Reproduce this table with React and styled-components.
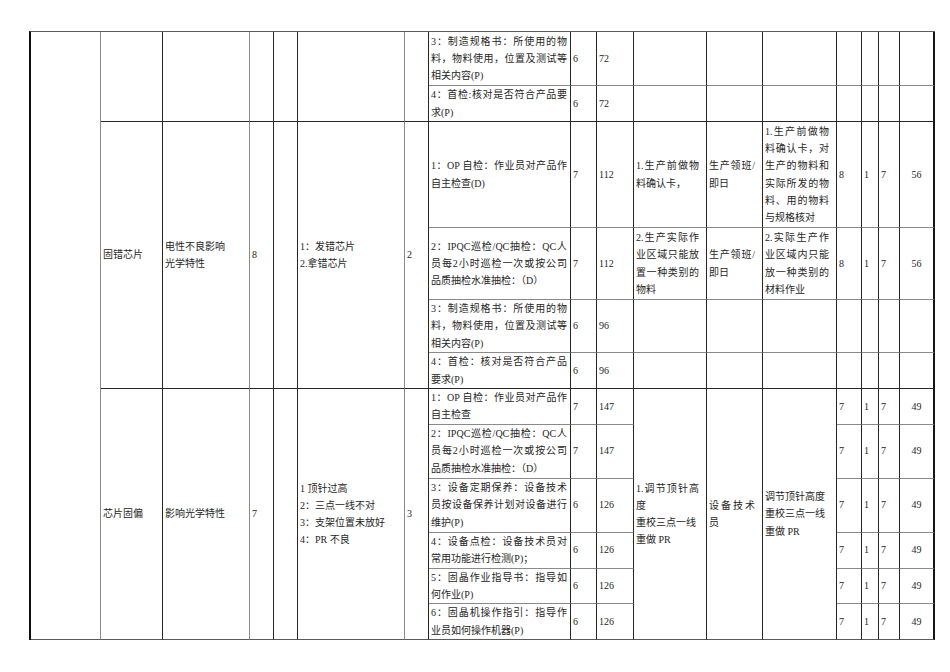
import React from "react";
import styled, { createGlobalStyle } from "styled-components";

const GlobalStyle = createGlobalStyle`
  html, body { margin: 0; padding: 0; background: #ffffff; }
  *, *::before, *::after { box-sizing: border-box; }
  body {
    font-family: "Liberation Serif", "Noto Sans CJK SC", serif;
    font-size: 10px;
    color: #262626;
  }
`;

const WIDTHS = [70, 62, 87, 24, 24, 107, 24, 142, 26, 37, 73, 56, 74, 25, 17, 21, 35];
const SOFT_COLS = new Set([0, 2, 5]);
const DARK = "#262626";
const SOFT = "#8a8a8a";

const Page = styled.div`
  padding: 31px 0 0 29px;
`;

const Sheet = styled.table`
  width: 906px;
  table-layout: fixed;
  border-collapse: separate;
  border-spacing: 0;
  border-left: 2px solid #111;
  border-top: 1px solid #5a5a5a;
`;

const Row = styled.tr`
  height: ${(p) => p.$h}px;
`;

const Cell = styled.td`
  padding: 0 ${(p) => (p.$pr != null ? p.$pr : 2)}px 0 2px;
  border-right: ${(p) =>
    p.$col === 16 ? `2px solid #161616` : `1px solid ${SOFT_COLS.has(p.$col) ? SOFT : DARK}`};
  border-bottom: 1px solid ${(p) => (p.$last ? "#5a5a5a" : p.$soft ? SOFT : DARK)};
  vertical-align: middle;
  text-align: ${(p) => (p.$center ? "center" : "left")};
  line-height: 17.3px;
  overflow: hidden;
`;

const Line = styled.div`
  text-align: ${(p) => (p.$j ? "justify" : "left")};
  text-align-last: ${(p) => (p.$j ? "justify" : "auto")};
  text-justify: inter-character;
`;

/* Paragraph: every line but the last is stretched to the cell width */
function Para({ lines, justifyAll = true, only = null }) {
  return lines.map((t, i) => {
    const j = only ? only.includes(i) : justifyAll && i < lines.length - 1;
    return (
      <Line key={i} $j={j}>
        {t}
      </Line>
    );
  });
}

function Plain({ lines }) {
  return lines.map((t, i) => <Line key={i}>{t}</Line>);
}

/* control (c7) + detection (c8) + rpn (c9) */
function Control({ lines, d, rpn, soft, last }) {
  return (
    <>
      <Cell $col={7} $pr={3} $soft={soft} $last={last}>
        <Para lines={lines} />
      </Cell>
      <Cell $col={8} $soft={soft} $last={last}>{d}</Cell>
      <Cell $col={9} $soft={soft} $last={last}>{rpn}</Cell>
    </>
  );
}

function Result({ s, o, d, rpn, soft, last }) {
  return (
    <>
      <Cell $col={13} $soft={soft} $last={last}>{s}</Cell>
      <Cell $col={14} $soft={soft} $last={last}>{o}</Cell>
      <Cell $col={15} $soft={soft} $last={last}>{d}</Cell>
      <Cell $col={16} $center $soft={soft} $last={last}>{rpn}</Cell>
    </>
  );
}

function EmptyActions({ soft }) {
  return (
    <>
      <Cell $col={10} $soft={soft} />
      <Cell $col={11} $soft={soft} />
      <Cell $col={12} $soft={soft} />
      <Cell $col={13} $soft={soft} />
      <Cell $col={14} $soft={soft} />
      <Cell $col={15} $soft={soft} />
      <Cell $col={16} $soft={soft} />
    </>
  );
}

const RULE3 = ["3：制造规格书：所使用的物", "料，物料使用，位置及测试等", "相关内容(P)"];
const IPQC = ["2：IPQC巡检/QC抽检：QC人", "员每2小时巡检一次或按公司", "品质抽检水准抽检：（D）"];

export default function App() {
  return (
    <Page>
      <GlobalStyle />
      <Sheet>
        <colgroup>
          {WIDTHS.map((w, i) => (
            <col key={i} style={{ width: w }} />
          ))}
        </colgroup>
        <tbody>
          {/* group 1 (continued from previous page) */}
          <Row $h={54}>
            <Cell $col={0} rowSpan={12} $last />
            <Cell $col={1} rowSpan={2} />
            <Cell $col={2} rowSpan={2} />
            <Cell $col={3} rowSpan={2} />
            <Cell $col={4} rowSpan={2} />
            <Cell $col={5} rowSpan={2} />
            <Cell $col={6} rowSpan={2} />
            <Control lines={RULE3} d="6" rpn="72" soft />
            <EmptyActions soft />
          </Row>
          <Row $h={36}>
            <Control lines={["4：首检:核对是否符合产品要", "求(P)"]} d="6" rpn="72" />
            <EmptyActions />
          </Row>

          {/* group 2: 固错芯片 */}
          <Row $h={106}>
            <Cell $col={1} rowSpan={4}>固错芯片</Cell>
            <Cell $col={2} rowSpan={4}>
              <Plain lines={["电性不良影响", "光学特性"]} />
            </Cell>
            <Cell $col={3} rowSpan={4}>8</Cell>
            <Cell $col={4} rowSpan={4} />
            <Cell $col={5} rowSpan={4}>
              <Plain lines={["1：发错芯片", "2.拿错芯片"]} />
            </Cell>
            <Cell $col={6} rowSpan={4}>2</Cell>
            <Control lines={["1：OP 自检：作业员对产品作", "自主检查(D)"]} d="7" rpn="112" soft />
            <Cell $col={10} $pr={7} $soft>
              <Para lines={["1.生产前做物", "料确认卡，"]} />
            </Cell>
            <Cell $col={11} $pr={7} $soft>
              <Para lines={["生产领班/", "即日"]} />
            </Cell>
            <Cell $col={12} $pr={7} $soft>
              <Para
                lines={["1.生产前做物", "料确认卡，对", "生产的物料和", "实际所发的物", "料、用的物料", "与规格核对"]}
              />
            </Cell>
            <Result s="8" o="1" d="7" rpn="56" soft />
          </Row>
          <Row $h={72}>
            <Control lines={IPQC} d="7" rpn="112" soft />
            <Cell $col={10} $pr={7} $soft>
              <Para lines={["2.生产实际作", "业区域只能放", "置一种类别的", "物料"]} />
            </Cell>
            <Cell $col={11} $pr={7} $soft>
              <Para lines={["生产领班/", "即日"]} />
            </Cell>
            <Cell $col={12} $pr={7} $soft>
              <Para lines={["2.实际生产作", "业区域内只能", "放一种类别的", "材料作业"]} />
            </Cell>
            <Result s="8" o="1" d="7" rpn="56" soft />
          </Row>
          <Row $h={53}>
            <Control lines={RULE3} d="6" rpn="96" soft />
            <EmptyActions soft />
          </Row>
          <Row $h={36}>
            <Control lines={["4：首检：核对是否符合产品", "要求(P)"]} d="6" rpn="96" />
            <EmptyActions />
          </Row>

          {/* group 3: 芯片固偏 */}
          <Row $h={35}>
            <Cell $col={1} rowSpan={6} $last>芯片固偏</Cell>
            <Cell $col={2} rowSpan={6} $last>影响光学特性</Cell>
            <Cell $col={3} rowSpan={6} $last>7</Cell>
            <Cell $col={4} rowSpan={6} $last />
            <Cell $col={5} rowSpan={6} $last>
              <Plain lines={["1 顶针过高", "2：三点一线不对", "3：支架位置未放好", "4：PR 不良"]} />
            </Cell>
            <Cell $col={6} rowSpan={6} $last>3</Cell>
            <Control lines={["1：OP 自检：作业员对产品作", "自主检查"]} d="7" rpn="147" soft />
            <Cell $col={10} rowSpan={6} $pr={7} $last>
              <Para lines={["1.调节顶针高", "度", "重校三点一线", "重做 PR"]} only={[0]} />
            </Cell>
            <Cell $col={11} rowSpan={6} $pr={7} $last>
              <Para lines={["设备技术", "员"]} />
            </Cell>
            <Cell $col={12} rowSpan={6} $pr={7} $last>
              <Plain lines={["调节顶针高度", "重校三点一线", "重做 PR"]} />
            </Cell>
            <Result s="7" o="1" d="7" rpn="49" soft />
          </Row>
          <Row $h={54}>
            <Control lines={IPQC} d="7" rpn="147" soft />
            <Result s="7" o="1" d="7" rpn="49" soft />
          </Row>
          <Row $h={54}>
            <Control
              lines={["3：设备定期保养：设备技术", "员按设备保养计划对设备进行", "维护(P)"]}
              d="6"
              rpn="126"
              soft
            />
            <Result s="7" o="1" d="7" rpn="49" soft />
          </Row>
          <Row $h={36}>
            <Control lines={["4：设备点检：设备技术员对", "常用功能进行检测(P)；"]} d="6" rpn="126" soft />
            <Result s="7" o="1" d="7" rpn="49" soft />
          </Row>
          <Row $h={35}>
            <Control lines={["5：固晶作业指导书：指导如", "何作业(P)"]} d="6" rpn="126" soft />
            <Result s="7" o="1" d="7" rpn="49" soft />
          </Row>
          <Row $h={36}>
            <Control lines={["6：固晶机操作指引：指导作", "业员如何操作机器(P)"]} d="6" rpn="126" last />
            <Result s="7" o="1" d="7" rpn="49" last />
          </Row>
        </tbody>
      </Sheet>
    </Page>
  );
}
